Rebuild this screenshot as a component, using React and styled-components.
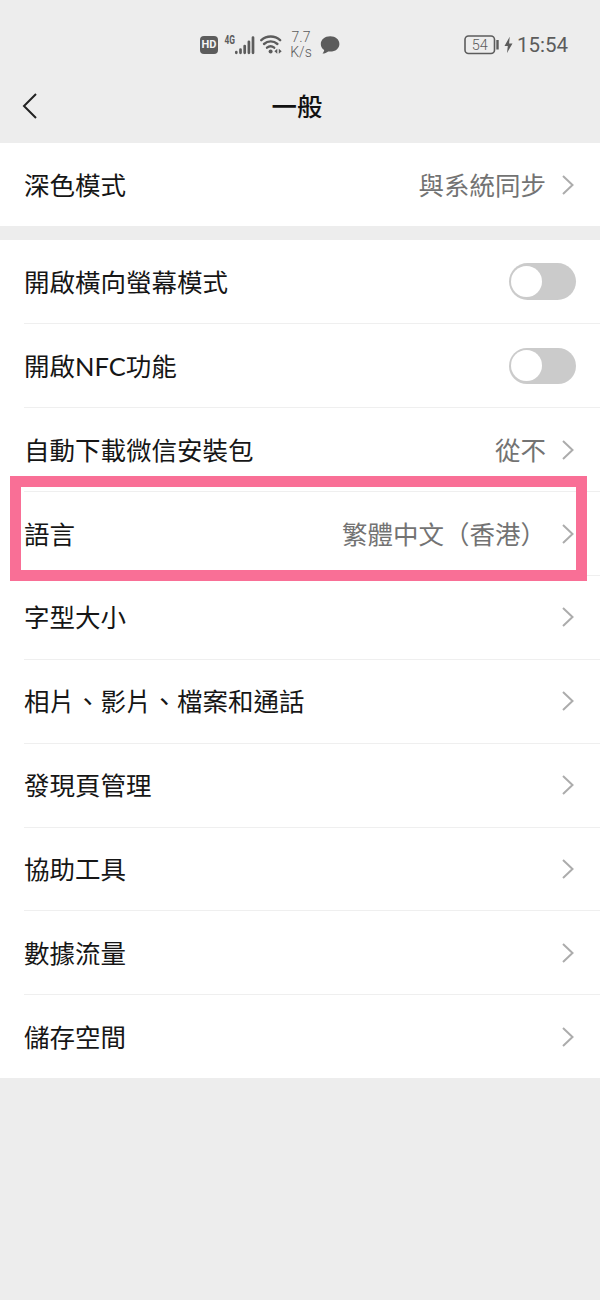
import styled, { createGlobalStyle } from 'styled-components';

const GlobalStyle = createGlobalStyle`
  body {
    margin: 0;
    background: #ededed;
    color: #161616;
    font-family: Lato, 'Noto Sans CJK TC', sans-serif;
  }
`;

const Screen = styled.div`
  width: 600px;
  min-height: 1300px;
  background: #ededed;
`;

const StatusBar = styled.div`
  display: flex;
  align-items: center;
  box-sizing: border-box;
  height: 72px;
  padding: 17px 33px 0 200px;

  color: #5c5c5c;
  font-family: Roboto, sans-serif;
`;

const StatusIcon = styled.svg`
  display: block;
  flex: none;
  margin-left: ${({ $gap = 0 }) => $gap}px;
`;

const HdBadge = styled.span`
  width: 18px;
  height: 18px;
  border-radius: 4px;

  background: #5c5c5c;
  color: #f4f4f4;
  font-size: 11px;
  font-weight: 700;
  line-height: 18.5px;
  text-align: center;
`;

const Speed = styled.span`
  width: 22px;
  margin-left: 7px;

  font-size: 14px;
  font-weight: 300;
  line-height: 15px;
  text-align: center;
  white-space: nowrap;
`;

const Power = styled.div`
  display: flex;
  align-items: center;
  margin-left: auto;
`;

const Clock = styled.span`
  width: 50px;
  margin-left: 4px;

  font-size: 20.5px;
  line-height: 22px;
  white-space: nowrap;
`;

const TitleBar = styled.header`
  display: grid;
  grid-template-columns: 60px 1fr 66px;
  align-items: center;
  box-sizing: border-box;
  height: 71px;
  padding-bottom: 3px;
`;

const BackIcon = styled.svg`
  display: block;
  margin-left: 20px;
`;

const Title = styled.h1`
  margin: 0;

  color: #111;
  font-size: 25.4px;
  font-weight: 500;
  line-height: 36px;
  text-align: center;
`;

const Group = styled.section`
  margin-bottom: 13.6px;
  background: #fff;
`;

const Row = styled.div`
  position: relative;
  display: flex;
  align-items: center;
  box-sizing: border-box;
  height: ${({ $height = 83.85 }) => $height}px;
  margin-left: 24px;
  padding-right: 24px;
  border-top: ${({ $divided }) => ($divided ? '1px solid #efefef' : 'none')};
`;

const Label = styled.span`
  flex: 1;
  font-size: 25.5px;
  line-height: 36px;
`;

const Value = styled.span`
  margin-right: 14px;

  color: #737373;
  font-size: 25.5px;
  line-height: 36px;
`;

const Chevron = styled.svg`
  display: block;
  flex: none;
`;

const Toggle = styled.span`
  box-sizing: border-box;
  width: 67.5px;
  height: 36.5px;
  padding: 2.75px 2.5px;
  border-radius: 19px;
  background: #cbcbcb;

  &::after {
    content: '';
    display: block;
    width: 31px;
    height: 31px;
    border-radius: 50%;
    background: #fff;
  }
`;

const Highlight = styled.span`
  position: absolute;
  top: -16px;
  right: 13px;
  left: -14px;
  z-index: 1;
  box-sizing: border-box;
  height: 105px;
  border: 11px solid #f96f96;
`;

const rows = [
  { label: '開啟橫向螢幕模式', toggle: true },
  { label: '開啟NFC功能', toggle: true },
  { label: '自動下載微信安裝包', value: '從不' },
  { label: '語言', value: '繁體中文（香港）', highlighted: true },
  { label: '字型大小' },
  { label: '相片、影片、檔案和通話' },
  { label: '發現頁管理' },
  { label: '協助工具' },
  { label: '數據流量' },
  { label: '儲存空間' },
];

const SettingRow = ({ label, value, toggle, highlighted, divided, height }) => (
  <Row $divided={divided} $height={height}>
    <Label>{label}</Label>
    {value && <Value>{value}</Value>}
    {toggle ? (
      <Toggle />
    ) : (
      <Chevron width="16" height="22" viewBox="0 0 16 22">
        <path d="M3 2 12.5 11 3 20" fill="none" stroke="#acacac" strokeWidth="2" />
      </Chevron>
    )}
    {highlighted && <Highlight />}
  </Row>
);

const SignalIcon = () => (
  <StatusIcon $gap={6} width="31" height="22" viewBox="0 0 31 22">
    <text
      x="0.5"
      y="9.5"
      fill="#5c5c5c"
      fontSize="12"
      fontWeight="700"
      textLength="10.5"
      lengthAdjust="spacingAndGlyphs"
    >
      4G
    </text>
    <path
      d="M12.3 18.2v.6M16.5 15.5v3.300M20.700 12V18.800M24.900 7.800v11M29 3.500v15.300"
      stroke="#5c5c5c"
      strokeWidth="2.7"
      strokeLinecap="round"
    />
  </StatusIcon>
);

const WifiIcon = () => (
  <StatusIcon $gap={5} width="23" height="22" viewBox="0 0 23 22">
    <g fill="none" stroke="#5c5c5c" strokeWidth="2.4" strokeLinecap="round">
      <path d="M1.3 6.2a14 14 0 0 1 18.8 0" />
      <path d="M4 10a10 10 0 0 1 13.4 0" />
      <path d="M7 13.700a5.600 5.600 0 0 1 7.200 0" />
    </g>
    <circle cx="10.6" cy="17.6" r="2" fill="#5c5c5c" />
    <path d="M17.3 14.8v5L14.4 17.3zM18.8 14.8v5l2.9-2.5z" fill="#5c5c5c" />
  </StatusIcon>
);

const App = () => (
  <Screen lang="zh-Hant">
    <GlobalStyle />
    <StatusBar>
      <HdBadge>HD</HdBadge>
      <SignalIcon />
      <WifiIcon />
      <Speed>
        7.7
        <br />
        K/s
      </Speed>
      <StatusIcon $gap={8} width="20" height="20" viewBox="0 0 20 20">
        <path
          d="M10.2 1.2C4.9 1.2.8 4.5.8 8.9c0 2.7 1.3 4.8 3.4 6.2-.2 1.4-.9 2.5-1.7 3.5 2.2-.1 4.2-.8 5.7-2.1.6.1 1.3.1 2 .1 5.3 0 9.2-3.3 9.2-7.7s-3.9-7.7-9.2-7.7z"
          fill="#5c5c5c"
        />
      </StatusIcon>
      <Power>
        <StatusIcon width="36" height="20" viewBox="0 0 36 20">
          <rect x="1" y="1" width="29.5" height="17.5" rx="3.5" fill="none" stroke="#5c5c5c" strokeWidth="1.6" />
          <path d="M33.5 5v9.5" stroke="#5c5c5c" strokeWidth="2.4" />
          <text x="15.7" y="14.8" fill="#5c5c5c" fontSize="14.5" fontWeight="300" textAnchor="middle">
            54
          </text>
        </StatusIcon>
        <StatusIcon $gap={4} width="9" height="18" viewBox="0 0 9 18">
          <path d="M5.7.8.5 10h3.3L3 17l5.5-9.500H5.100z" fill="#5c5c5c" />
        </StatusIcon>
        <Clock>15:54</Clock>
      </Power>
    </StatusBar>
    <TitleBar>
      <BackIcon width="20" height="28" viewBox="0 0 20 28">
        <path d="M16 2 4 14l12 12" fill="none" stroke="#222" strokeWidth="2" />
      </BackIcon>
      <Title>一般</Title>
    </TitleBar>
    <Group>
      <SettingRow label="深色模式" value="與系統同步" height={83} />
    </Group>
    <Group>
      {rows.map((row, index) => (
        <SettingRow key={row.label} divided={index > 0} {...row} />
      ))}
    </Group>
  </Screen>
);

export default App;
